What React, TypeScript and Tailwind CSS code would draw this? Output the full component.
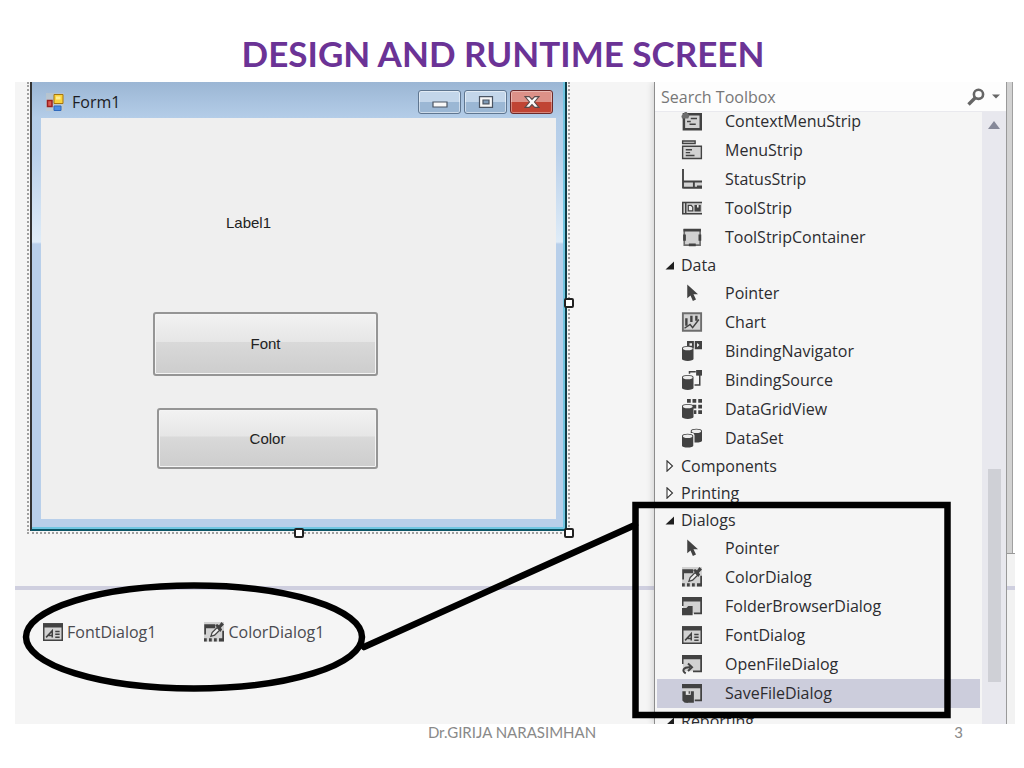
import type { ReactNode } from "react";

const DARK = "#424242";
const MID = "#6d6d6d";
const PALE = "#d2d2d2";

function Cylinder({ x, y, w = 8.6, h = 10.5 }: { x: number; y: number; w?: number; h?: number }) {
  const r = w / 2;
  return (
    <g>
      <path
        d={`M${x} ${y + 1.6} A${r} 1.6 0 0 1 ${x + w} ${y + 1.6} V${y + h - 1.4} A${r} 1.5 0 0 1 ${x} ${y + h - 1.4} Z`}
        fill={DARK}
      />
      <ellipse cx={x + r} cy={y + 2} rx={r - 0.7} ry={1.4} fill="#ededed" />
    </g>
  );
}

const glyphs: Record<string, ReactNode> = {
  context: (
    <>
      <path d="M1.5 2.5H15v12H1.5z" fill={PALE} stroke={DARK} strokeWidth="2" />
      <path d="M-.5 4l3.5-4 3 3.5-1 2.5H0z" fill={MID} />
      <path d="M7 6h5M4 8.3h3M6 10.5h5" stroke={DARK} strokeWidth="1.2" />
    </>
  ),
  menu: (
    <>
      <path d="M.5 .8h10v2H.5zM.5 5h15v9.8H.5z" fill={PALE} stroke={DARK} strokeWidth="1.1" />
      <path d="M3 7.8h5M3 10.1h3.5M3 12.4h7" stroke={DARK} strokeWidth="1.1" />
    </>
  ),
  status: (
    <>
      <path d="M1 10h15v4.5H1z" fill={PALE} />
      <path d="M.8 0v15.5M1 10h15M1 15h15M9.5 10v5M12 14h4" stroke={DARK} strokeWidth="1.5" fill="none" />
    </>
  ),
  tool: (
    <>
      <path d="M0 3h16v10H0z" fill={PALE} />
      <path d="M0 3.5h16M0 12.6h16M.6 3.5v9M3 4v8.5" stroke={DARK} strokeWidth="1.2" />
      <path d="M5 5.8h2.4l1.2 1.5v3H5z" fill="#eee" stroke={DARK} />
      <path d="M10 5.5h5v5.3h-5z" fill={DARK} />
      <path d="M12 5.5h1.3v2H12z" fill="#eee" />
    </>
  ),
  container: (
    <>
      <path d="M1.8 2.3h12.7v12.2H1.8z" fill={PALE} stroke={MID} strokeWidth="1.3" />
      <path d="M1.2 2.4h13.9M2 6v5M14.3 6v5M5.5 14.3H11" stroke={DARK} strokeWidth="2.2" />
    </>
  ),
  pointer: <path d="M4.2 1.2v11l2.6-2.3 1.9 4.4 2.5-1.1-2-4.2h3.6z" fill={DARK} />,
  chart: (
    <>
      <path d="M.7 1h14.6v14H.7z" fill={PALE} stroke={MID} strokeWidth="1.5" />
      <path d="M3.5 5v6M7.5 3v5M11.5 3v4" stroke={DARK} strokeWidth="1.9" />
      <path d="M2 13l4.5-3 2 2.5L13.5 6" stroke={DARK} strokeWidth="1.2" fill="none" />
    </>
  ),
  navigator: (
    <>
      <path d="M4 0h5.5v5.5L4 4zM10.2 0H16v6.5h-5.8z" fill={DARK} />
      <path d="M6 1.8h2v2H6zM12 1.5l2 1.7L12 5z" fill="#eee" />
      <Cylinder x={0} y={4} w={9.2} h={11.8} />
    </>
  ),
  source: (
    <>
      <path d="M11.3 0H16v4.5h-4.7z" fill={DARK} />
      <path d="M6 3V1.3h5M14.2 4v8H10" fill="none" stroke={DARK} strokeWidth="1.2" />
      <Cylinder x={0} y={4} w={9.2} h={11.8} />
    </>
  ),
  grid: (
    <>
      <path
        d="M4 0h3v3H4zM8.4 0h3v3h-3zM13 0h3v3h-3zM8.4 4.5h3v3h-3zM13 4.5h3v3h-3zM9.5 9h2v3h-2zM13 9h3v3h-3z"
        fill={DARK}
      />
      <Cylinder x={0} y={4} w={9.2} h={11.8} />
    </>
  ),
  dataset: (
    <>
      <Cylinder x={7} y={0.5} w={9} h={11} />
      <path d="M6.5 4H9l1 1.5v8H9z" fill="#f5f5f5" />
      <Cylinder x={0} y={4.5} w={9} h={11} />
    </>
  ),
  color: (
    <>
      <path d="M0 0h16v15.8H0z" fill={PALE} />
      <path d="M.2 1.7H9V5H1.6v5H.2zM14.6 7H16v8h-1.4z" fill={DARK} />
      <path d="M0 13h2.2v2.5H0zM4 13h2.2v2.5H4zM8 13h2.2v2.5H8zM12 13h4v2.5h-4z" fill={DARK} />
      <path d="M5.5 11.5l1-3 4-4 2 2-4 4z" fill="#eee" stroke={DARK} />
      <path d="M9 2.5l1.5-1L12 2.5 14 0l2 2-2.5 2.5 1 1.5L13 8z" fill={DARK} />
    </>
  ),
  folder: (
    <>
      <path d="M.7 1.5h14.6v12.3H.7z" fill={PALE} />
      <path d="M0 .7h16v3.6H0zM14.6 3H16v11.5H9.5v-1.3h5.1zM0 4h1.2v4H0z" fill={DARK} />
      <path d="M0 9.5h3.5L5 8h3.5v7.3H0z" fill={DARK} />
    </>
  ),
  font: (
    <>
      <path d="M.6 1.6h14.8v13H.6z" fill={PALE} stroke={DARK} strokeWidth="1.2" />
      <path d="M0 1h16v3.4H0z" fill={DARK} />
      <path
        d="M2.5 12.3L7.4 7v5.3M4.5 10.7h3M9.8 7.5h3.5M9.8 9.8h3.5M9.8 12.1h3.5"
        fill="none"
        stroke={DARK}
        strokeWidth="1.2"
      />
    </>
  ),
  open: (
    <>
      <path d="M.7 1.5h14.6v12.3H.7z" fill={PALE} />
      <path d="M0 .7h16v3.4H0zM14.6 3H16v11.5H8.8v-1.3h5.8zM0 4h1.2v4H0z" fill={DARK} />
      <path d="M3 15.5C-.5 13.5 1 10.3 6.5 10.6M4.8 7.6l3.2 3-3.2 3" fill="none" stroke={DARK} strokeWidth="1.6" />
    </>
  ),
  save: (
    <>
      <path d="M.7 1.5h14.6v12.3H.7z" fill={PALE} />
      <path d="M0 .7h16v3.4H0zM14.6 3H16v11.5h-5.8v-1.3h4.4z" fill={DARK} />
      <path d="M.3 6.5h9.2v9.3H2.2L.3 14z" fill={DARK} />
      <path d="M3 6.5h4v3H3z" fill="#e4e4e4" />
      <path d="M5.3 6.5h1v2h-1zM3.5 13h1.2v2.8H3.5z" fill={DARK} />
    </>
  ),
};

function Glyph({ name }: { name: string }) {
  return (
    <svg viewBox="0 0 16 16" className="h-5 w-5 shrink-0 overflow-visible" aria-hidden="true">
      {glyphs[name]}
    </svg>
  );
}

type Item = { label: string; icon: string; selected?: boolean };
type Group = { title?: string; open?: boolean; items: Item[] };

const groups: Group[] = [
  {
    items: [
      { label: "ContextMenuStrip", icon: "context" },
      { label: "MenuStrip", icon: "menu" },
      { label: "StatusStrip", icon: "status" },
      { label: "ToolStrip", icon: "tool" },
      { label: "ToolStripContainer", icon: "container" },
    ],
  },
  {
    title: "Data",
    open: true,
    items: [
      { label: "Pointer", icon: "pointer" },
      { label: "Chart", icon: "chart" },
      { label: "BindingNavigator", icon: "navigator" },
      { label: "BindingSource", icon: "source" },
      { label: "DataGridView", icon: "grid" },
      { label: "DataSet", icon: "dataset" },
    ],
  },
  { title: "Components", items: [] },
  { title: "Printing", items: [] },
  {
    title: "Dialogs",
    open: true,
    items: [
      { label: "Pointer", icon: "pointer" },
      { label: "ColorDialog", icon: "color" },
      { label: "FolderBrowserDialog", icon: "folder" },
      { label: "FontDialog", icon: "font" },
      { label: "OpenFileDialog", icon: "open" },
      { label: "SaveFileDialog", icon: "save", selected: true },
    ],
  },
  { title: "Reporting", open: true, items: [] },
];

function Toolbox() {
  return (
    <aside className="flex w-[352px] shrink-0 flex-col border-l border-[#8c8c8c] bg-[#f5f5f5] shadow-[-2px_0_6px_rgba(0,0,0,0.12)]">
      <div className="flex h-[30px] shrink-0 items-center border-b border-[#e9e9ee] bg-[#fdfdfd] pl-1.5 pr-0.5">
        <input
          type="text"
          aria-label="Search Toolbox"
          placeholder="Search Toolbox"
          className="min-w-0 flex-1 bg-transparent text-[16px] leading-5 outline-none placeholder:text-[#777]"
        />
        <button type="button" aria-label="Search" className="mr-0.5 flex h-5 w-5 items-center justify-center">
          <svg viewBox="0 0 18 18" className="h-[18px] w-[18px]" fill="none" stroke="#666">
            <circle cx="11.5" cy="6.3" r="4.6" strokeWidth="2.6" />
            <path d="M8 10L1.5 16.5" strokeWidth="3.4" />
          </svg>
        </button>
        <button type="button" aria-label="Search options" className="flex h-5 w-4 items-center justify-center">
          <svg viewBox="0 0 8 5" className="h-[5px] w-2" fill="#666">
            <path d="M0 .5h8L4 4.5z" />
          </svg>
        </button>
      </div>
      <div className="flex min-h-0 flex-1">
        <div className="min-w-0 flex-1 overflow-hidden">
          <div className="-mt-[5px] px-0.5">
            {groups.map((group, i) => (
              <section key={i}>
                {group.title && (
                  <button
                    type="button"
                    aria-expanded={!!group.open}
                    className="flex h-[27px] w-full items-center gap-1.5 pb-px pl-2 text-left text-[16px] leading-5"
                  >
                    <svg viewBox="0 0 10 12" className="h-3 w-2.5 shrink-0">
                      {group.open ? (
                        <path d="M9 2.5V10.5H.5z" fill="#1e1e1e" />
                      ) : (
                        <path d="M2 .8v10.4L7.5 6z" fill="#fff" stroke="#333" strokeWidth="1.1" />
                      )}
                    </svg>
                    {group.title}
                  </button>
                )}
                <ul>
                  {group.items.map((item) => (
                    <li key={item.label}>
                      <button
                        type="button"
                        className={`flex h-[29px] w-full items-center gap-[23px] pb-px pl-[25px] text-left text-[16px] leading-5 ${
                          item.selected ? "bg-[#cccddc]" : ""
                        }`}
                      >
                        <Glyph name={item.icon} />
                        {item.label}
                      </button>
                    </li>
                  ))}
                </ul>
              </section>
            ))}
          </div>
        </div>
        <div className="flex w-6 flex-col items-center bg-[#e8e8ee] pt-[9px]">
          <svg viewBox="0 0 12 8" className="h-2 w-3 shrink-0" fill="#868999">
            <path d="M0 8L6 0l6 8z" />
          </svg>
          <div className="mt-[340px] h-[213px] w-[13px] shrink-0 bg-[#cfd0d6]" />
        </div>
      </div>
    </aside>
  );
}

const captionButton =
  "flex h-6 w-[43px] items-center justify-center rounded-[3px] border border-[#5f7690] bg-linear-to-b from-[#c3d6ea] from-50% to-[#9bb7d4] to-50% shadow-[inset_0_0_0_1px_rgba(255,255,255,0.5)]";

const formButton =
  "flex items-center justify-center rounded-[3px] border-2 border-[#959595] bg-[linear-gradient(#f2f2f2,#e6e6e6_46%,#d9d9d9_47%,#cdcdcd)] text-[15px] leading-5 text-[#222] shadow-[inset_0_0_0_1px_#f4f4f4]";

function Handle({ className }: { className: string }) {
  return <span className={`absolute h-2.5 w-2.5 rounded-[2px] border-2 border-[#222] bg-white ${className}`} />;
}

function FormWindow() {
  return (
    <div className="relative ml-3 flex h-[452px] w-[543px] border-2 border-t-0 border-dotted border-[#a0a0a0] pb-px pl-px pr-px">
      <div className="flex flex-1 flex-col border-x-2 border-b-2 border-b-[#0c5566] border-l-[#333] border-r-[#0d3c47]">
        <div className="flex flex-1 flex-col border-b-2 border-r-2 border-[#6fc6e2] bg-[linear-gradient(#9bb6d4,#b4cde8_36px,#b9d0ea_70px,#dfecf8_160px,#b8cfea_162px)] pb-2 pl-[9px] pr-[7px]">
          <div className="flex h-9 shrink-0 items-center pl-[5px] pt-1">
            <svg viewBox="0 0 18 18" className="h-[18px] w-[18px]">
              <path d="M0 0h18v18H0z" fill="#c9c9c4" opacity=".5" />
              <path d="M8 1.5h9v9H8z" fill="#fbd43d" stroke="#a5750d" />
              <path d="M10 3.5h4.5v3H10z" fill="#ffed94" />
              <path d="M1.5 7.5h4.5v6H1.5z" fill="#dc5a50" stroke="#9b2020" strokeWidth="1.5" />
              <path d="M8 13h7v4.5H8z" fill="#4d8de4" stroke="#2f69bd" />
            </svg>
            <span className="ml-2 flex-1 text-[16px] leading-5 text-[#1c1c24]">Form1</span>
            <div className="flex gap-[3px] pr-[3px]">
              <button type="button" aria-label="Minimize" className={captionButton}>
                <svg viewBox="0 0 16 12" className="h-3 w-4">
                  <path d="M1 6h14v5H1z" fill="#f8f8f8" stroke="#4b5563" strokeWidth="1.2" />
                </svg>
              </button>
              <button type="button" aria-label="Maximize" className={captionButton}>
                <svg viewBox="0 0 16 12" className="h-3 w-4">
                  <path d="M1.5.6h13v10.8h-13z" fill="#f8f8f8" stroke="#4b5563" strokeWidth="1.2" />
                  <path d="M5 4h6v3.8H5z" fill="#7f9bb8" stroke="#4b5563" strokeWidth="1.2" />
                </svg>
              </button>
              <button
                type="button"
                aria-label="Close"
                className="flex h-6 w-[43px] items-center justify-center rounded-[3px] border border-[#6b2a2a] bg-linear-to-b from-[#dc9188] from-50% to-[#c04434] to-50% shadow-[inset_0_0_0_1px_rgba(255,255,255,0.35)]"
              >
                <svg viewBox="0 0 16 12" className="h-3 w-4">
                  <path
                    d="M1 .6h4.3L8 3.4 10.7.6H15L10.5 6l4.5 5.4h-4.3L8 8.6l-2.7 2.8H1L5.5 6z"
                    fill="#fafafa"
                    stroke="#5a4a4a"
                    strokeWidth="1.1"
                  />
                </svg>
              </button>
            </div>
          </div>
          <div className="flex flex-1 flex-col items-start bg-[#efefef] font-['Liberation_Sans',sans-serif]">
            <span className="ml-[185px] mt-[95px] text-[15px] leading-5 text-[#222]">Label1</span>
            <button type="button" className={`ml-28 mt-[79px] h-16 w-[225px] ${formButton}`}>
              Font
            </button>
            <button type="button" className={`ml-[116px] mt-8 h-[61px] w-[221px] ${formButton}`}>
              Color
            </button>
          </div>
        </div>
      </div>
      <Handle className="-right-1.5 top-[216px]" />
      <Handle className="-bottom-1.5 left-[265px]" />
      <Handle className="-bottom-1.5 -right-1.5" />
    </div>
  );
}

export default function App() {
  return (
    <div className="flex h-screen flex-col bg-white font-['Open_Sans','Noto_Sans',sans-serif] text-[#2c2c30]">
      <header className="flex h-[82px] shrink-0 items-center justify-center pr-[18px] pt-6">
        <h1 className="whitespace-nowrap font-['Lato',sans-serif] text-[35px] font-bold leading-10 text-[#6b3396]">
          DESIGN AND RUNTIME SCREEN
        </h1>
      </header>

      <main className="relative ml-[15px] mr-[9px] flex min-h-0 flex-1 overflow-hidden">
        <div className="flex min-w-0 flex-1 flex-col bg-[#f5f5f5]">
          <div className="h-[504px] shrink-0">
            <FormWindow />
          </div>
          <div className="h-1 shrink-0 bg-[#cfcfdf]" />
          <div className="flex flex-1 items-start gap-12 pl-7 pt-8 text-[16px] leading-5 text-[#4a4a50]">
            <div className="flex items-center gap-1">
              <Glyph name="font" />
              FontDialog1
            </div>
            <div className="flex items-center gap-1">
              <Glyph name="color" />
              ColorDialog1
            </div>
          </div>
        </div>

        <Toolbox />

        <div className="flex w-[9px] shrink-0 flex-col border-l border-[#999] bg-[#f2f2f2]">
          <div className="flex h-[472px] shrink-0 border-b border-[#999] bg-white">
            <div className="w-1.5 border-r border-[#a0a0a0] bg-[#d2d2d2]" />
          </div>
          <div className="mt-8 h-1 shrink-0 bg-[#cfcfdf]" />
        </div>

        <svg
          viewBox="0 0 1000 642"
          className="pointer-events-none absolute left-0 top-0 h-[642px] w-[1000px]"
          fill="none"
          stroke="#000"
          aria-hidden="true"
        >
          <ellipse cx="179" cy="555" rx="168" ry="51.5" strokeWidth="6.5" />
          <path d="M349 565L620 443" strokeWidth="6.5" strokeLinecap="round" />
          <path d="M620.5 423h312v210h-312z" strokeWidth="6.5" />
        </svg>
      </main>

      <footer className="grid h-11 shrink-0 grid-cols-[1fr_auto_1fr] items-start font-['Lato',sans-serif] text-[15px] leading-4 text-[#898989]">
        <span />
        <span>Dr.GIRIJA NARASIMHAN</span>
        <span className="pr-[61px] text-right">3</span>
      </footer>
    </div>
  );
}
